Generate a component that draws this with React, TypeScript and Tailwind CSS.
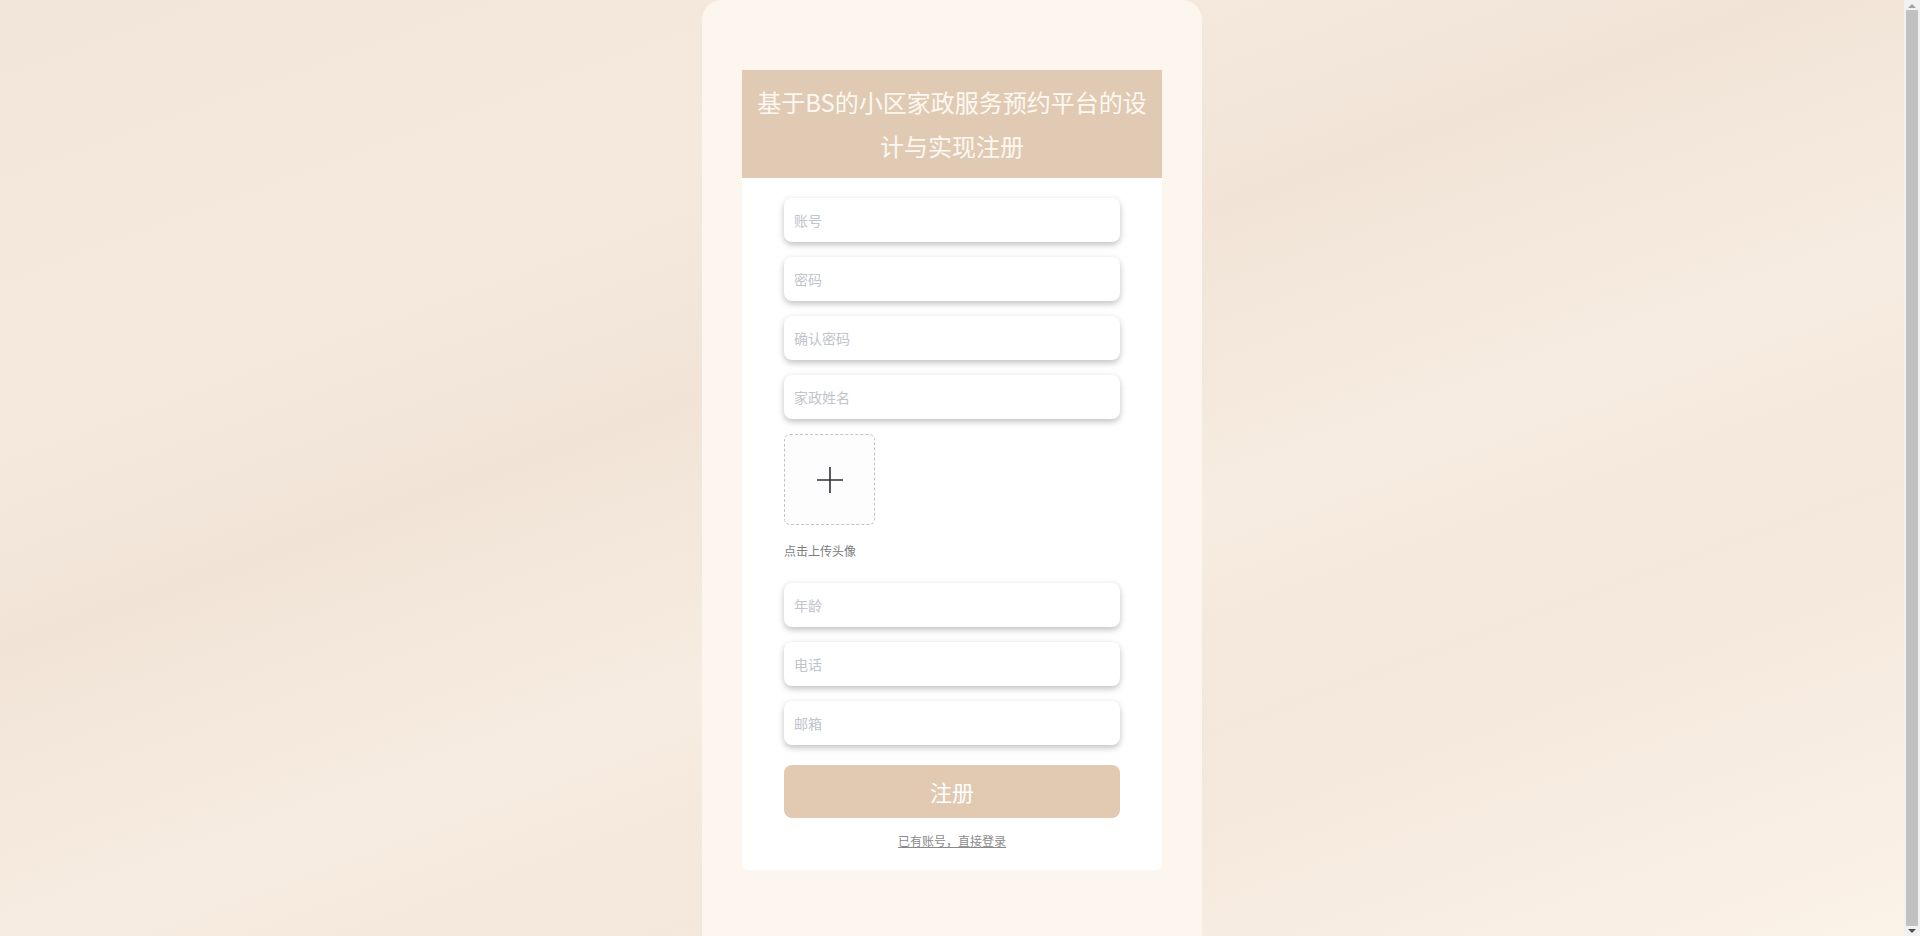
import React from "react";

const fields1 = ["账号", "密码", "确认密码", "家政姓名"];
const fields2 = ["年龄", "电话", "邮箱"];

function Field({ ph, type = "text" }: { ph: string; type?: string }) {
  return (
    <input
      type={type}
      placeholder={ph}
      className="block w-full h-[44px] mb-[15px] rounded-[8px] bg-white px-[10px] text-[14px] text-[#606266] placeholder:text-[#c0c4cc] outline-none shadow-[0_3px_6px_rgba(0,0,0,0.22),0_0_8px_rgba(0,0,0,0.04)]"
    />
  );
}

function Scrollbar() {
  return (
    <div className="w-[16px] h-full shrink-0 bg-[#f1f1f1] flex flex-col items-center">
      <div className="h-[10px] flex items-center justify-center">
        <svg width="8" height="5" viewBox="0 0 8 5">
          <path d="M0 5 L4 1 L8 5 Z" fill="#a3a3a3" />
        </svg>
      </div>
      <div className="flex-1 w-[12px] rounded-[1px] bg-[#c1c1c1]" />
      <div className="h-[10px] flex items-center justify-center">
        <svg width="8" height="5" viewBox="0 0 8 5">
          <path d="M0 0 L8 0 L4 4 Z" fill="#505050" />
        </svg>
      </div>
    </div>
  );
}

export default function App() {
  return (
    <div
      className="h-[936px] w-full flex overflow-hidden"
      style={{ fontFamily: '"Noto Sans CJK SC", "Noto Sans", sans-serif' }}
    >
      <div className="flex-1 h-full overflow-hidden bg-[linear-gradient(160deg,#f2e5d9_0%,#f5e9de_25%,#f1e4d7_40%,#f7ece1_58%,#f4e7db_72%,#fbf2e8_100%)]">
        <div className="mx-auto w-[500px] h-[960px] rounded-[20px] bg-[#fcf6ee] px-[40px] pt-[70px]">
          <div className="bg-white rounded-b-[6px] pb-[20px]">
            <div className="bg-[#e0cab4] px-[10px] py-[10px] text-center text-[24px] leading-[44px] text-[#fdf8f1]">
              基于BS的小区家政服务预约平台的设计与实现注册
            </div>
            <div className="mx-auto w-[336px] pt-[20px]">
              {fields1.map((f, i) => (
                <Field key={f} ph={f} type={i === 1 || i === 2 ? "password" : "text"} />
              ))}
              <div className="mt-[3px] w-[91px] h-[91px] rounded-[6px] border border-dashed border-[#c0c4cc] bg-[#fdfdfd] flex items-center justify-center">
                <svg width="28" height="28" viewBox="0 0 28 28">
                  <path d="M14 1 V27 M1 14 H27" stroke="#2f3237" strokeWidth="1.6" fill="none" />
                </svg>
              </div>
              <div className="mt-[17px] text-[12px] leading-[18px] text-[#7a7c80]">点击上传头像</div>
              <div className="pt-[23px] pb-[20px]">
                {fields2.map((f) => (
                  <Field key={f} ph={f} />
                ))}
              </div>
              <button className="-mt-[15px] block w-full h-[53px] rounded-[8px] bg-[#e1c9b2] text-[22px] text-white">
                注册
              </button>
              <div className="mt-[14px] text-center text-[12px] leading-[18px]">
                <a className="text-[#8a8a8a] underline cursor-pointer">已有账号，直接登录</a>
              </div>
            </div>
          </div>
        </div>
      </div>
      <Scrollbar />
    </div>
  );
}
